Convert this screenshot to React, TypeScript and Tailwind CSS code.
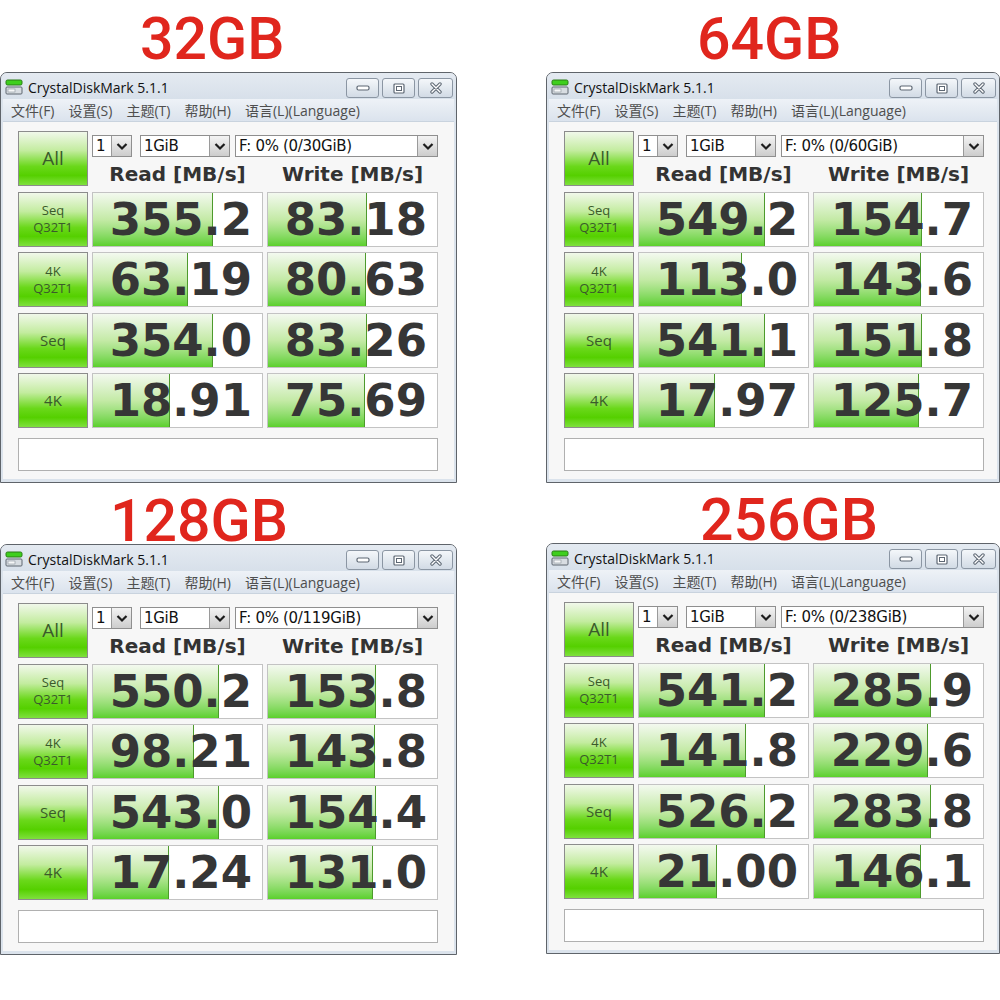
const windows = [
  {
    label: '32GB',
    labelPad: 'pl-[140px] pt-[17px] h-[72px]',
    drive: 'F: 0% (0/30GiB)',
    read: ['355.2', '63.19', '354.0', '18.91'],
    write: ['83.18', '80.63', '83.26', '75.69'],
  },
  {
    label: '64GB',
    labelPad: 'pl-[151px] pt-[17px] h-[72px]',
    drive: 'F: 0% (0/60GiB)',
    read: ['549.2', '113.0', '541.1', '17.97'],
    write: ['154.7', '143.6', '151.8', '125.7'],
  },
  {
    label: '128GB',
    labelPad: 'pl-[110px] pt-[16px] h-[61px]',
    drive: 'F: 0% (0/119GiB)',
    read: ['550.2', '98.21', '543.0', '17.24'],
    write: ['153.8', '143.8', '154.4', '131.0'],
  },
  {
    label: '256GB',
    labelPad: 'pl-[154px] pt-[15px] h-[60px]',
    drive: 'F: 0% (0/238GiB)',
    read: ['541.2', '141.8', '526.2', '21.00'],
    write: ['285.9', '229.6', '283.8', '146.1'],
  },
];

const tests = [
  { top: 'Seq', bottom: 'Q32T1' },
  { top: '4K', bottom: 'Q32T1' },
  { top: 'Seq' },
  { top: '4K' },
];

const greenBtn =
  'border border-[#8c8c8c] bg-[linear-gradient(to_bottom,#f1f8ea_0%,#c3ec9f_35%,#6ad81a_65%,#55d000_82%,#7fe03e_100%)] flex flex-col items-center justify-center text-[#3a5a2b] font-["Open_Sans",sans-serif]';

function AppIcon() {
  return (
    <svg width="18" height="18" viewBox="0 0 18 18">
      <rect x="1" y="2" width="16" height="5" rx="1.5" fill="#3fcf1e" stroke="#2a7a16" strokeWidth="1" />
      <rect x="1" y="9" width="16" height="7" rx="1" fill="#d8dde2" stroke="#5e6670" strokeWidth="1" />
      <rect x="3" y="11" width="7" height="3" fill="#f6f7f8" stroke="#8a939c" strokeWidth="0.6" />
    </svg>
  );
}

function CaptionButton({ kind }: { kind: 'min' | 'max' | 'close' }) {
  return (
    <div
      className={`h-[20px] ${kind === 'close' ? 'w-[35px]' : 'w-[33px]'} rounded-[3px] border border-[#8b96a3] bg-linear-to-b from-[#f4f7fa] to-[#d2dbe5] flex items-center justify-center`}
    >
      {kind === 'min' && (
        <svg width="14" height="8" viewBox="0 0 14 8">
          <rect x="1" y="2" width="12" height="4" rx="1.5" fill="#fff" stroke="#5d6773" strokeWidth="1.2" />
        </svg>
      )}
      {kind === 'max' && (
        <svg width="12" height="11" viewBox="0 0 12 11">
          <rect x="1" y="1" width="10" height="9" rx="1" fill="#fff" stroke="#5d6773" strokeWidth="1.2" />
          <rect x="3.5" y="3.5" width="5" height="4" fill="none" stroke="#5d6773" strokeWidth="1" />
        </svg>
      )}
      {kind === 'close' && (
        <svg width="14" height="12" viewBox="0 0 14 12">
          <path d="M3 2 L11 10 M11 2 L3 10" stroke="#5d6773" strokeWidth="3.4" strokeLinecap="round" />
          <path d="M3 2 L11 10 M11 2 L3 10" stroke="#fff" strokeWidth="1.4" strokeLinecap="round" />
        </svg>
      )}
    </div>
  );
}

function Chevron() {
  return (
    <svg width="12" height="9" viewBox="0 0 12 9">
      <path d="M1.5 2 L6 6.5 L10.5 2" fill="none" stroke="#1c1c1c" strokeWidth="2.2" />
    </svg>
  );
}

function Select({ text, width }: { text: string; width: string }) {
  return (
    <div className={`${width} h-[22px] border border-[#8f8f8f] bg-white flex items-center`}>
      <span className="flex-1 pl-[3px] text-[15px] leading-[20px] text-[#111] font-['DejaVu_Sans',sans-serif] tracking-[-0.3px] whitespace-nowrap">
        {text}
      </span>
      <div className="w-[20px] h-[20px] border-l border-[#9a9a9a] bg-linear-to-b from-[#f3f3f3] to-[#cdcdcd] flex items-center justify-center">
        <Chevron />
      </div>
    </div>
  );
}

function Result({ value }: { value: string }) {
  const pct = (Math.log10(parseFloat(value) * 10) / 5) * 100;
  return (
    <div className="relative h-[55px] border border-[#c3c3c3] bg-white overflow-hidden">
      <div
        className="absolute left-0 top-0 bottom-0 border-r border-[#4d9a2c] bg-linear-to-b from-[#f3f9ef] via-[#c4eaa6] to-[#5bd02a]"
        style={{ width: `${pct}%` }}
      />
      <div className="relative h-full flex items-center justify-end pr-[10px] text-[45px] font-bold leading-none text-[#363636] font-['DejaVu_Sans',sans-serif]">
        {value}
      </div>
    </div>
  );
}

function DiskMark({ w }: { w: (typeof windows)[number] }) {
  return (
    <div className="h-[411px] border border-[#5f646a] rounded-t-[7px] bg-[#dbe3ec] flex flex-col overflow-hidden">
      {/* title bar */}
      <div className="h-[26px] shrink-0 flex items-center bg-linear-to-b from-[#e4eaf1] to-[#d7e0ea]">
        <div className="pl-[4px] pt-[2px]">
          <AppIcon />
        </div>
        <span className="ml-[5px] mt-[2px] text-[14px] text-[#111] font-['Open_Sans',sans-serif] whitespace-nowrap">
          CrystalDiskMark 5.1.1
        </span>
        <div className="ml-auto mr-[3px] mt-[4px] flex gap-[3px]">
          <CaptionButton kind="min" />
          <CaptionButton kind="max" />
          <CaptionButton kind="close" />
        </div>
      </div>
      {/* menu bar */}
      <div className="h-[23px] shrink-0 mx-[2px] flex items-center gap-[14px] pl-[8px] bg-linear-to-b from-[#eef2f7] to-[#dbe3ed] border-b border-[#c9d3de] text-[14px] text-[#4e4e4e] font-['Open_Sans','Noto_Sans_CJK_SC',sans-serif] whitespace-nowrap">
        <span>文件(F)</span>
        <span>设置(S)</span>
        <span>主题(T)</span>
        <span>帮助(H)</span>
        <span>语言(L)(Language)</span>
      </div>
      {/* client area */}
      <div className="flex-1 mx-[2px] mb-[3px] bg-[#f7f7f7] pt-[9px] pl-[15px]">
        <div className="w-[420px] grid grid-cols-[70px_1fr_1fr] gap-x-[4px] gap-y-[5.5px]">
          <div className={`${greenBtn} h-[55px] text-[19px]`}>All</div>
          <div className="col-span-2 h-[55px] flex flex-col">
            <div className="mt-[4px] flex">
              <Select text="1" width="w-[40px]" />
              <div className="ml-[8px]">
                <Select text="1GiB" width="w-[90px]" />
              </div>
              <div className="ml-[5px] flex-1">
                <Select text={w.drive} width="w-full" />
              </div>
            </div>
            <div className="flex-1 grid grid-cols-2 gap-x-[4px] items-center pt-[5px] text-[20px] font-bold text-[#333] font-['DejaVu_Sans',sans-serif] leading-none">
              <div className="text-center">Read [MB/s]</div>
              <div className="text-center">Write [MB/s]</div>
            </div>
          </div>
          {tests.map((t, i) => (
            <div key={i} className="contents">
              <div className={`${greenBtn} h-[55px] leading-[17px]`}>
                {t.bottom ? (
                  <>
                    <span className="text-[13px]">{t.top}</span>
                    <span className="text-[13px]">{t.bottom}</span>
                  </>
                ) : (
                  <span className="text-[15px]">{t.top}</span>
                )}
              </div>
              <Result value={w.read[i]} />
              <Result value={w.write[i]} />
            </div>
          ))}
        </div>
        <div className="mt-[10px] w-[420px] h-[33px] border border-[#b0b0b0] bg-white" />
      </div>
    </div>
  );
}

function Label({ w }: { w: (typeof windows)[number] }) {
  return (
    <div className={`${w.labelPad} shrink-0`}>
      <div className="text-[59px] leading-[44px] font-medium text-[#e0261d] font-['Roboto',sans-serif] whitespace-nowrap">
        {w.label}
      </div>
    </div>
  );
}

export default function App() {
  return (
    <div className="w-[1000px] h-[1000px] bg-white overflow-hidden grid grid-cols-[457px_454px] gap-x-[89px]">
      <div className="flex flex-col">
        <Label w={windows[0]} />
        <DiskMark w={windows[0]} />
        <Label w={windows[2]} />
        <DiskMark w={windows[2]} />
      </div>
      <div className="flex flex-col">
        <Label w={windows[1]} />
        <DiskMark w={windows[1]} />
        <Label w={windows[3]} />
        <DiskMark w={windows[3]} />
      </div>
    </div>
  );
}
